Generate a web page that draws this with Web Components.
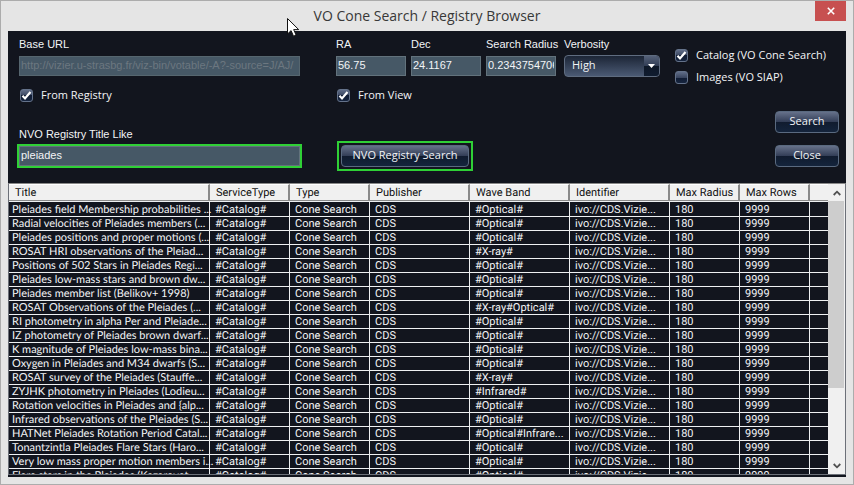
<!DOCTYPE html>
<html lang="en">
<head>
<meta charset="utf-8">
<title>VO Cone Search / Registry Browser</title>
<style>
html, body { margin: 0; height: 100%; }
body { --ui: "Open Sans", "Noto Sans", sans-serif; --sans: "Liberation Sans", Arial, sans-serif; --narrow: Roboto, "Liberation Sans", sans-serif; font: 11px/14px var(--sans); color: #f2f4f6; }
</style>
</head>
<body>
<vo-window heading="VO Cone Search / Registry Browser">
  <vo-search-form></vo-search-form>
  <vo-results></vo-results>
</vo-window>
<vo-pointer></vo-pointer>
<script>
const define = (name, html, setup) => {
  const tpl = document.createElement('template');
  tpl.innerHTML = html;
  customElements.define(name, class extends HTMLElement {
    constructor() {
      super();
      this.attachShadow({ mode: 'open' }).append(tpl.content.cloneNode(true));
    }
    connectedCallback() { if (setup) setup(this, this.shadowRoot); }
  });
};

define('vo-window', `
<style>
:host { display: flex; flex-direction: column; box-sizing: border-box; height: 100vh; padding: 0 7px 7px; border: 1px solid #acacac; background: #e5e5e5; }
header { flex: none; height: 30px; display: grid; grid-template-columns: 1fr auto 1fr; box-sizing: border-box; }
h1 { grid-column: 2; margin: 0; font: 14px/30px "Open Sans", sans-serif; color: #383838; }
button { justify-self: end; display: grid; place-items: center; width: 31px; height: 20px; padding: 0; border: 0; background: #c75050; }
main { flex: 1; min-height: 0; display: flex; flex-direction: column; background: #12151e; padding-bottom: 2px; }
</style>
<header><h1></h1><button aria-label="Close window"><svg width="8" height="8" viewBox="0 0 8 8"><path d="M.8.8l6.4 6.4M7.2.8L.8 7.2" stroke="#fff" stroke-width="1.6"/></svg></button></header>
<main><slot></slot></main>`, (el, root) => { root.querySelector('h1').textContent = el.getAttribute('heading'); });

define('vo-field', `
<style>
:host { display: block; min-width: 0; }
label { display: block; margin-bottom: 5px; white-space: nowrap; }
input { display: block; box-sizing: border-box; width: 100%; height: 20px; margin: 0; padding: 0 1px 2px; border: 1px solid #62727c; border-radius: 0; background: #465866; color: #f2f4f6; font: 11px/14px var(--sans); outline: 0; }
input:disabled { color: #6c7780; border-color: #56666f; }
:host([marked]) input { outline: 2px solid #2fd036; }
</style>
<label for="i"></label><input id="i" type="text">`, (el, root) => {
  root.querySelector('label').textContent = el.getAttribute('label');
  const i = root.querySelector('input');
  i.value = el.getAttribute('value');
  i.disabled = el.hasAttribute('disabled');
});

define('vo-select', `
<style>
:host { display: block; }
label { display: block; margin-bottom: 4px; }
.box { display: grid; position: relative; }
select { appearance: none; box-sizing: border-box; width: 100%; height: 22px; margin: 0; padding: 0 24px 3px 7px; border: 1px solid #5f6c80; border-radius: 4px; background: linear-gradient(#1c2536, #4b5a74); color: #f2f4f6; font: 11px/14px var(--ui); }
.arrow { position: absolute; top: 1px; right: 1px; bottom: 1px; width: 15px; display: grid; place-items: center; border-radius: 0 3px 3px 0; background: linear-gradient(#56627a, #303c54 50%, #0e1828 50%, #101c30); pointer-events: none; }
</style>
<label for="s">Verbosity</label>
<div class="box"><select id="s"><option>High</option><option>Medium</option><option>Low</option></select>
<span class="arrow"><svg width="7" height="4" viewBox="0 0 7 4"><path d="M0 0h7L3.500 4z" fill="#fff"/></svg></span></div>`);

define('vo-check', `
<style>
:host { display: block; }
label { display: flex; align-items: center; gap: 8px; font: 11px/16px var(--ui); white-space: nowrap; }
.box { display: grid; }
input, svg { grid-area: 1 / 1; }
input { appearance: none; box-sizing: border-box; width: 13px; height: 13px; margin: 0; border: 1px solid #64728a; border-radius: 3px; background: linear-gradient(#606d88, #3a4660 50%, #101c34 50%, #16243e); }
svg { pointer-events: none; place-self: center; visibility: hidden; }
input:checked + svg { visibility: visible; }
</style>
<label><span class="box"><input type="checkbox"><svg width="11" height="11" viewBox="0 0 11 11"><path d="M1.500 5.800L4 8.400 9.500 2" fill="none" stroke="#fff" stroke-width="2.200"/></svg></span><slot></slot></label>`,
(el, root) => { root.querySelector('input').checked = el.hasAttribute('checked'); });

define('vo-button', `
<style>
:host { display: block; }
button { display: block; box-sizing: border-box; width: 100%; height: 22px; padding: 0 0 2px; border: 1px solid #5a6a80; border-radius: 4px; background: linear-gradient(#66718a, #343f58 48%, #101b2e 48%, #14243c); color: #f2f4f6; font: 11px/14px var(--ui); white-space: nowrap; }
:host([marked]) { outline: 2px solid #2fd036; outline-offset: 2px; }
</style>
<button type="button"><slot></slot></button>`);

define('vo-search-form', `
<style>
:host { display: block; flex: none; padding: 6px 7px 16px 11px; }
form { display: grid; grid-template-columns: minmax(0, 1fr) 503px; column-gap: 36px; row-gap: 8px; }
.stack { display: flex; flex-direction: column; gap: 11px; }
.query { display: flex; align-items: flex-start; }
.coords { display: grid; grid-template-columns: repeat(3, 70px); gap: 11px 5px; margin-right: 8px; }
.coords vo-check { grid-column: 1 / -1; }
.stack vo-check, .coords vo-check { padding-left: 1px; }
vo-select { width: 96px; margin-right: 15px; }
.kinds { display: flex; flex-direction: column; gap: 6px; padding-top: 10px; }
.title { align-self: end; padding-bottom: 1px; }
.actions { display: flex; justify-content: space-between; align-items: flex-end; }
.run { width: 128px; margin-left: 5px; }
.end { display: flex; flex-direction: column; gap: 12px; width: 64px; }
</style>
<form>
  <div class="stack"><vo-field label="Base URL" value="http://vizier.u-strasbg.fr/viz-bin/votable/-A?-source=J/AJ/" disabled></vo-field><vo-check checked>From Registry</vo-check></div>
  <div class="query">
    <div class="coords"><vo-field label="RA" value="56.75"></vo-field><vo-field label="Dec" value="24.1167"></vo-field><vo-field label="Search Radius" value="0.23437547065"></vo-field><vo-check checked>From View</vo-check></div>
    <vo-select></vo-select>
    <div class="kinds"><vo-check checked>Catalog (VO Cone Search)</vo-check><vo-check>Images (VO SIAP)</vo-check></div>
  </div>
  <vo-field class="title" label="NVO Registry Title Like" value="pleiades" marked></vo-field>
  <div class="actions"><vo-button class="run" marked>NVO Registry Search</vo-button><div class="end"><vo-button>Search</vo-button><vo-button>Close</vo-button></div></div>
</form>`);

const titles = [
  'Pleiades field Membership probabilities ...', 'Radial velocities of Pleiades members (...',
  'Pleiades positions and proper motions (...', 'ROSAT HRI observations of the Pleiad...',
  'Positions of 502 Stars in Pleiades Regi...', 'Pleiades low-mass stars and brown dw...',
  'Pleiades member list (Belikov+ 1998)', 'ROSAT Observations of the Pleiades (...',
  'RI photometry in alpha Per and Pleiade...', 'IZ photometry of Pleiades brown dwarf...',
  'K magnitude of Pleiades low-mass bina...', 'Oxygen in Pleiades and M34 dwarfs (S...',
  'ROSAT survey of the Pleiades (Stauffe...', 'ZYJHK photometry in Pleiades (Lodieu...',
  'Rotation velocities in Pleiades and {alp...', 'Infrared observations of the Pleiades (S...',
  'HATNet Pleiades Rotation Period Catal...', 'Tonantzintla Pleiades Flare Stars (Haro...',
  'Very low mass proper motion members i...', 'Flare stars in the Pleiades (Kazarovet...'];
const bands = { 3: '#X-ray#', 7: '#X-ray#Optical#', 12: '#X-ray#', 13: '#Infrared#', 16: '#Optical#Infrare...' };

define('vo-results', `
<style>
:host { display: flex; flex: 1; min-height: 0; border: 1px solid #6c7078; border-top-color: #888; font-family: var(--narrow); text-rendering: geometricPrecision; }
.view { flex: 1; min-width: 0; overflow: hidden; }
table { width: 100%; table-layout: fixed; border-collapse: separate; border-spacing: 0; }
th, td { box-sizing: border-box; overflow: hidden; white-space: nowrap; text-align: left; font-weight: 400; }
th { height: 17px; padding: 0 0 0 6px; line-height: 15px; color: #111; background: #f0f0f0; border: solid #8a8a8a; border-width: 0 2px 1px 0; border-top: 1px solid #fff; }
th:last-child { border-right: 0; }
td { height: 14px; padding: 0 0 0 5px; line-height: 13px; border: solid #eef0f2; border-width: 0 1px 1px 0; }
td:first-child { padding-left: 3px; overflow: visible; font-family: Lato, var(--narrow); }
td:last-child { border-right: 0; }
tbody tr:first-child td { height: 16px; border-top: 1px solid #eef0f2; }
.t { width: 201px; } .s { width: 80px; } .m { width: 100px; } .n { width: 70px; }
.bar { flex: none; width: 17px; display: flex; flex-direction: column; background: #f0f0f0; }
.bar button { flex: none; height: 17px; padding: 0; border: 0; display: grid; place-items: center; background: none; }
.track { flex: 1; }
.thumb { height: 73%; margin-right: 1px; background: #cdcdcd; }
</style>
<div class="view"><table>
<colgroup><col class="t"><col class="s"><col class="s"><col class="m"><col class="m"><col class="m"><col class="n"><col class="n"><col></colgroup>
<thead><tr><th>Title</th><th>ServiceType</th><th>Type</th><th>Publisher</th><th>Wave Band</th><th>Identifier</th><th>Max Radius</th><th>Max Rows</th><th></th></tr></thead>
<tbody></tbody></table></div>
<div class="bar"><button aria-label="Scroll up"><svg width="8" height="6" viewBox="0 0 8 6"><path d="M.7 5L4 1.700 7.300 5" fill="none" stroke="#505050" stroke-width="1.800"/></svg></button><div class="track"><div class="thumb"></div></div><button aria-label="Scroll down"><svg width="8" height="6" viewBox="0 0 8 6"><path d="M.7 1L4 4.300 7.300 1" fill="none" stroke="#505050" stroke-width="1.800"/></svg></button></div>`,
(el, root) => {
  const body = root.querySelector('tbody');
  titles.forEach((title, n) => {
    const row = body.insertRow();
    for (const text of [title, '#Catalog#', 'Cone Search', 'CDS', bands[n] || '#Optical#', 'ivo://CDS.Vizie...', '180', '9999', ''])
      row.insertCell().textContent = text;
  });
});

define('vo-pointer', `
<style>:host { position: absolute; left: 287px; top: 18px; pointer-events: none; } svg { display: block; }</style>
<svg width="13" height="20" viewBox="0 0 13 20"><path d="M.5.5v15.500l3.600-3.400 2.400 5.600 2.600-1.100-2.400-5.500h5z" fill="#fff" stroke="#111"/></svg>`);
</script>
</body>
</html>
